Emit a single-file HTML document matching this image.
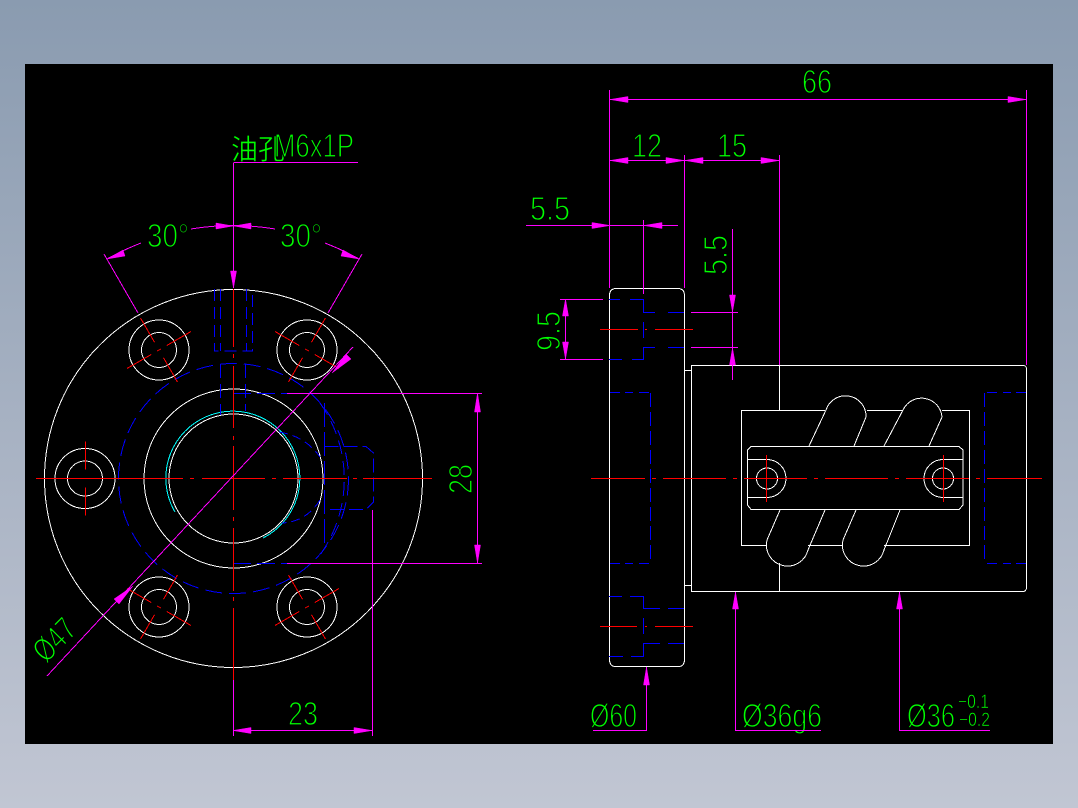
<!DOCTYPE html>
<html><head><meta charset="utf-8"><title>CAD</title>
<style>
html,body{margin:0;padding:0;width:1078px;height:808px;overflow:hidden;background:linear-gradient(#8a9bb0,#c1c6d3)}
svg{position:absolute;left:0;top:0;display:block}
.t{font-family:"Liberation Sans","Noto Sans CJK SC",sans-serif;fill:#0f0;stroke:#000;stroke-width:1.2;font-size:33px}
.s{font-size:19px;stroke-width:.6}
.c{font-size:28px;stroke-width:.4;font-family:"Noto Sans CJK SC","WenQuanYi Zen Hei",sans-serif}
.w{fill:none;stroke:#fff;stroke-width:1}
.m{fill:none;stroke:#f0f;stroke-width:1}
.a{fill:#f0f;stroke:#f0f;stroke-width:.5}
.r{fill:none;stroke:#f00;stroke-width:1}
.rt{fill:none;stroke:#f00;stroke-width:1}
.b{fill:none;stroke:#00f;stroke-width:1}
.bt{fill:none;stroke:#00f;stroke-width:1}
</style></head><body>
<svg width="1078" height="808" viewBox="0 0 1078 808" xmlns="http://www.w3.org/2000/svg">
<defs>
<g id="hx"><path class="rt" d="M0-37V-9M0 9V37M-37 0H-9M9 0H37M-2 0H2"/></g>
</defs>
<rect x="25" y="64" width="1028" height="680" fill="#000"/>

<!-- text -->
<text class="t" x="802" y="93" textLength="30" lengthAdjust="spacingAndGlyphs">66</text>
<text class="t" x="632" y="157" textLength="30" lengthAdjust="spacingAndGlyphs">12</text>
<text class="t" x="717" y="157" textLength="30" lengthAdjust="spacingAndGlyphs">15</text>
<text class="t" x="530" y="220" textLength="40" lengthAdjust="spacingAndGlyphs">5.5</text>
<text class="t" transform="translate(727,275) rotate(-90)" textLength="40" lengthAdjust="spacingAndGlyphs">5.5</text>
<text class="t" transform="translate(560,351) rotate(-90)" textLength="40" lengthAdjust="spacingAndGlyphs">9.5</text>
<text class="t" transform="translate(472,494) rotate(-90)" textLength="30" lengthAdjust="spacingAndGlyphs">28</text>
<text class="t" x="288" y="725" textLength="30" lengthAdjust="spacingAndGlyphs">23</text>
<text class="t" x="147" y="247" textLength="42" lengthAdjust="spacingAndGlyphs">30°</text>
<text class="t" x="280" y="247" textLength="42" lengthAdjust="spacingAndGlyphs">30°</text>
<text class="c t" x="231" y="159" textLength="54" lengthAdjust="spacingAndGlyphs">油孔</text>
<text class="t" x="274" y="157" textLength="80" lengthAdjust="spacingAndGlyphs">M6x1P</text>
<text class="t" transform="translate(46,664) rotate(-45)" textLength="46" lengthAdjust="spacingAndGlyphs">Ø47</text>
<text class="t" x="590" y="727" textLength="47" lengthAdjust="spacingAndGlyphs">Ø60</text>
<text class="t" x="742" y="727" textLength="80" lengthAdjust="spacingAndGlyphs">Ø36g6</text>
<text class="t" x="907" y="727" textLength="48" lengthAdjust="spacingAndGlyphs">Ø36</text>
<text class="t s" x="958" y="708" textLength="31" lengthAdjust="spacingAndGlyphs">−0.1</text>
<text class="t s" x="959" y="726" textLength="31" lengthAdjust="spacingAndGlyphs">−0.2</text>

<!-- left view: white -->
<g shape-rendering="crispEdges">
<circle class="w" cx="233.500" cy="478.500" r="189"/>
<circle class="w" cx="233.500" cy="478.500" r="89.500"/>
<circle class="w" cx="233.500" cy="478.500" r="64.500"/>
<circle class="w" cx="159" cy="350" r="30"/><circle class="w" cx="159" cy="350" r="17.500"/>
<circle class="w" cx="307" cy="350" r="30"/><circle class="w" cx="307" cy="350" r="17.500"/>
<circle class="w" cx="159" cy="607" r="30"/><circle class="w" cx="159" cy="607" r="17.500"/>
<circle class="w" cx="307" cy="607" r="30"/><circle class="w" cx="307" cy="607" r="17.500"/>
<circle class="w" cx="85" cy="478.500" r="30"/><circle class="w" cx="85" cy="478.500" r="17.500"/>
<path d="M175 512A67 67 0 1 1 263 538" fill="none" stroke="#0ff" stroke-width="1"/>

<!-- left view: blue -->
<circle class="bt" cx="233.500" cy="478.500" r="115" stroke-dasharray="17 7"/>
<path class="b" d="M214.500 289V351H252.500V289M220.500 289V351M246.500 289V351" stroke-dasharray="12 6"/>
<path class="b" d="M220.500 364V415M245.500 364V411" stroke-dasharray="14 6"/>
<path class="bt" d="M233 393.500H313M233 563.500H313" stroke-dasharray="18 6"/>
<path class="b" d="M324.500 403V545" stroke-dasharray="24 5"/>
<path class="b" d="M324.500 446.500H366L373.500 453V502L366 509.500H324.500" stroke-dasharray="14 5"/>
<path class="bt" d="M320 403A131 131 0 0 1 320 555" stroke-dasharray="14 7"/>
<path class="bt" d="M279 432Q305 436 320 457M320 500Q306 522 282 523" stroke-dasharray="9 5"/>

<!-- left view: red -->
<path class="r" d="M36 478.500H101M108 478.500H112M120 478.500H183M190 478.500H194M202 478.500H265M272 478.500H276M283 478.500H347M353 478.500H357M363 478.500H432"/>
<path class="r" d="M233.500 289V347M233.500 354V358M233.500 366V428M233.500 436V440M233.500 446V510M233.500 517V521M233.500 528V591M233.500 597V601M233.500 608V680"/>
<use href="#hx" transform="translate(159,350) rotate(-30)"/>
<use href="#hx" transform="translate(307,350) rotate(30)"/>
<use href="#hx" transform="translate(159,607) rotate(30)"/>
<use href="#hx" transform="translate(307,607) rotate(-30)"/>
<use href="#hx" transform="translate(85.500,478.500)"/>

<!-- left view: magenta -->
<path class="m" d="M233.500 163V288M233.500 162.500H358M104 254L138 313M362 254L328 313"/>
<path class="m" d="M107 259Q123 250 141 243M191 229Q233 222 275 229M325 243Q343 250 359 259"/>
<path class="m" d="M47 676L353 347"/>
<path class="m" d="M287 393.500H482M287 563.500H482M477.500 393V563M233.500 680V736M372.500 510V736M233 730.500H372"/>
</g>
<polygon class="a" points="233.500,288 230.500,271 236.500,271"/>
<polygon class="a" points="233,226 216,223 216,229"/>
<polygon class="a" points="234,226 251,223 251,229"/>
<polygon class="a" points="107,259 123,250 125,256"/>
<polygon class="a" points="359,259 343,250 341,256"/>
<polygon class="a" points="332,373 346,354 351,359"/>
<polygon class="a" points="133,586 119,604 114,599"/>
<polygon class="a" points="477.500,393 474.500,412 480.500,412"/>
<polygon class="a" points="477.500,563 474.500,545 480.500,545"/>
<polygon class="a" points="233,730.500 251,727.500 251,733.500"/>
<polygon class="a" points="372,730.500 354,727.500 354,733.500"/>

<!-- right view: white -->
<g shape-rendering="crispEdges">
<path class="w" d="M616 288.500H678Q684 288.500 684.500 295V660Q684 667 678 666.500H616Q610 667 609.500 660V295Q610 288.500 616 288.500Z"/>
<path class="w" d="M691.500 365.500H1023Q1026 365.500 1026.500 368V588Q1026 591.500 1023 591.500H691.500Z"/>
<path class="w" d="M684 370.500H691M684 585.500H691M779.500 365V410M779.500 563V591"/>
<path class="w" d="M825 410.500H741.500V545.500H767M808 545.500H843M884 545.500H969.500V410.500H942M867 410.500H903"/>
<path class="w" d="M751 446.500H959L963 450V505L959 509.500H751L747.500 505V450Z"/>
<path class="w" d="M747.500 459.500H767A19 19 0 0 1 767 497.500H747.500"/>
<path class="w" d="M962.500 459.500H943A19 19 0 0 0 943 497.500H962.500"/>
<circle class="w" cx="767" cy="478.500" r="10.500"/>
<circle class="w" cx="943" cy="478.500" r="10.500"/>
<path class="w" d="M809 446L826 410A20.500 20.500 0 0 1 866 417L854 446"/>
<path class="w" d="M884 446L903 410A20.500 20.500 0 0 1 942 417L929 446"/>
<path class="w" d="M780 510L767 540A21 21 0 0 0 808 550L825 510"/>
<path class="w" d="M856 510L843 540A21 21 0 0 0 884 550L900 510"/>

<!-- right view: blue -->
<path class="b" d="M610 392.500H650M610 563.500H650" stroke-dasharray="10 5 8 6"/>
<path class="b" d="M650.500 393V564" stroke-dasharray="14 5"/>
<path class="b" d="M1026 392.500H986M1026 563.500H986" stroke-dasharray="10 5 8 6"/>
<path class="b" d="M984.500 393V564" stroke-dasharray="14 5"/>
<path class="b" d="M609 299.500H620M630 299.500H643.500V312.500H655M668 312.500H684"/>
<path class="bt" d="M643.500 347.500H655M668 347.500H684M643.500 347V359.500H632M622 359.500H609"/>
<path class="bt" d="M643.500 322V338"/>
<path class="b" d="M609 596.500H622M630 596.500H643.500V608.500H660M668 608.500H684"/>
<path class="bt" d="M643.500 618V634M643.500 643.500H660M668 643.500H684M643.500 643V656.500H631M623 656.500H609"/>

<!-- right view: red -->
<path class="r" d="M591 478.500H645M652 478.500H656M663 478.500H726M733 478.500H737M744 478.500H807M814 478.500H818M825 478.500H888M895 478.500H899M906 478.500H969M976 478.500H980M987 478.500H1042"/>
<path class="r" d="M766.500 455V502M943.500 455V502"/>
<path class="rt" d="M600 329.500H638M645 329.500H647M655 329.500H693M600 626.500H637M645 626.500H647M655 626.500H693"/>

<!-- right view: magenta -->
<path class="m" d="M609.500 90V288M1026.500 90V365M610 99.500H1026"/>
<path class="m" d="M610 160.500H779M684.500 155V288M779.500 155V365"/>
<path class="m" d="M526 225.500H678M643.500 220V294"/>
<path class="m" d="M732.500 229V380M691 312.500H738M691 347.500H738"/>
<path class="m" d="M565.500 299V359M560 299.500H603M560 359.500H603"/>
<path class="m" d="M646.500 667V730M593 730.500H647M735.500 592V730M735 730.500H821M899.500 592V730M899 730.500H990"/>
</g>
<polygon class="a" points="610,99.500 628,96.500 628,102.500"/>
<polygon class="a" points="1026,99.500 1008,96.500 1008,102.500"/>
<polygon class="a" points="610,160.500 628,157.500 628,163.500"/>
<polygon class="a" points="684,160.500 666,157.500 666,163.500"/>
<polygon class="a" points="685,160.500 703,157.500 703,163.500"/>
<polygon class="a" points="779,160.500 761,157.500 761,163.500"/>
<polygon class="a" points="610,225.500 592,222.500 592,228.500"/>
<polygon class="a" points="644,225.500 662,222.500 662,228.500"/>
<polygon class="a" points="732.500,312 729.500,295 735.500,295"/>
<polygon class="a" points="732.500,348 729.500,365 735.500,365"/>
<polygon class="a" points="565.500,299 562.500,316 568.500,316"/>
<polygon class="a" points="565.500,359 562.500,342 568.500,342"/>
<polygon class="a" points="646.500,667 643.500,685 649.500,685"/>
<polygon class="a" points="735.500,592 732.500,609 738.500,609"/>
<polygon class="a" points="899.500,592 896.500,609 902.500,609"/>
</svg>
</body></html>
